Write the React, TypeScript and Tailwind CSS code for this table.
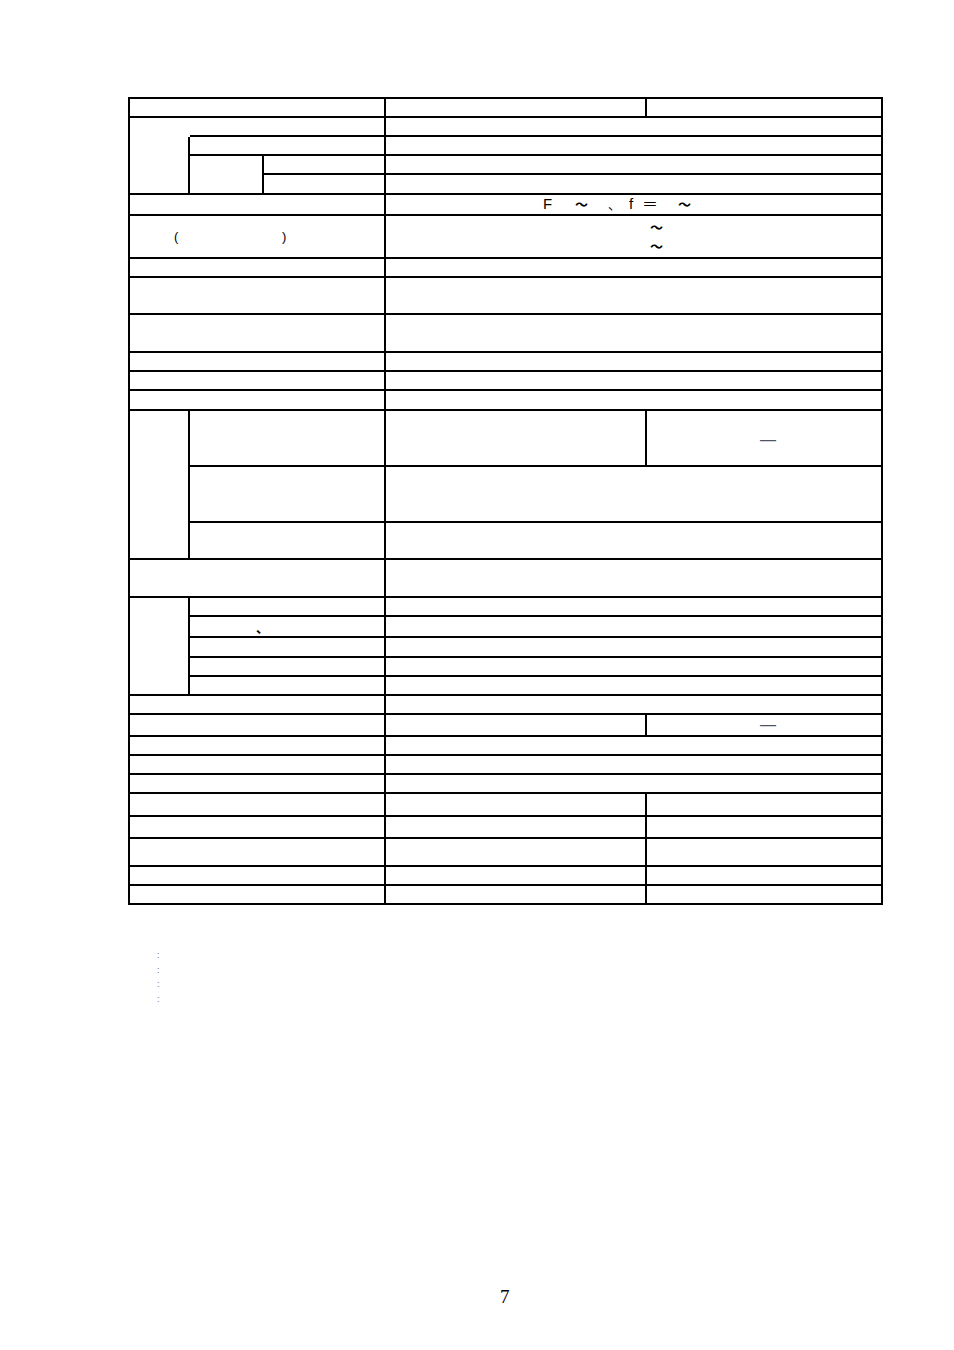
import React from 'react';

interface CellProps {
    className?: string;
    children?: React.ReactNode;
}

function Cell({ className = '', children }: CellProps) {
    return (
        <div className={`border-r-2 border-b-2 border-black flex items-center ${className}`}>
            {children}
        </div>
    );
}

// plain rows: label over the three left columns, value over the two right ones
function WideRow() {
    return (
        <>
            <Cell className="col-span-3" />
            <Cell className="col-span-2" />
        </>
    );
}

function SubRow({ children }: { children?: React.ReactNode }) {
    return (
        <>
            <Cell className="col-span-2">{children}</Cell>
            <Cell className="col-span-2" />
        </>
    );
}

function SplitRow({ right }: { right?: React.ReactNode }) {
    return (
        <>
            <Cell className="col-span-3" />
            <Cell />
            <Cell>{right}</Cell>
        </>
    );
}

const dash = <span className="w-full text-center pl-[8px] text-[16px] text-gray-600 leading-none">—</span>;

export default function App() {
    return (
        <div
            className="min-h-[1350px] w-[954px] bg-white pl-[128px] pt-[97px] text-black text-[13px]"
            style={{ fontFamily: '"Liberation Sans", "Noto Sans CJK JP", sans-serif' }}
        >
            <div className="grid w-fit border-l-2 border-t-2 border-black grid-cols-[60px_74px_122px_261px_236px] grid-rows-[19px_19px_19px_19px_20px_21px_43px_19px_37px_38px_19px_19px_20px_56px_56px_37px_38px_19px_21px_20px_19px_19px_19px_22px_19px_19px_19px_23px_22px_28px_19px_19px]">
                {/* r1 */}
                <SplitRow />

                {/* r2 - r5 */}
                <div />
                <SubRow />
                <Cell className="row-span-3" />
                <SubRow />
                <Cell className="row-span-2" />
                <Cell />
                <Cell className="col-span-2" />
                <Cell />
                <Cell className="col-span-2" />

                {/* r6 */}
                <Cell className="col-span-3" />
                <Cell className="col-span-2 pl-[157px]">
                    <span className="w-[32px] text-[15px]">F</span>
                    <span className="w-[33px] font-bold">～</span>
                    <span className="w-[21px]">、</span>
                    <span className="w-[13px] text-[15px]">f</span>
                    <span className="w-[36px] text-[16px]">＝</span>
                    <span className="font-bold">～</span>
                </Cell>

                {/* r7 */}
                <Cell className="col-span-3 pl-[44px]">
                    <span className="w-[108px]">(</span>
                    <span>)</span>
                </Cell>
                <Cell className="col-span-2 pl-[264px]">
                    <div className="flex flex-col leading-[19px] font-bold">
                        <span>～</span>
                        <span>～</span>
                    </div>
                </Cell>

                {/* r8 - r13 */}
                <WideRow />
                <WideRow />
                <WideRow />
                <WideRow />
                <WideRow />
                <WideRow />

                {/* r14 - r16 */}
                <Cell className="row-span-3" />
                <Cell className="col-span-2" />
                <Cell />
                <Cell className="pt-[3px]">{dash}</Cell>
                <SubRow />
                <SubRow />

                {/* r17 */}
                <WideRow />

                {/* r18 - r22 */}
                <Cell className="row-span-5" />
                <SubRow />
                <SubRow>
                    <span className="pl-[66px] pt-[2px] font-bold">、</span>
                </SubRow>
                <SubRow />
                <SubRow />
                <SubRow />

                {/* r23 - r27 */}
                <WideRow />
                <SplitRow right={dash} />
                <WideRow />
                <WideRow />
                <WideRow />

                {/* r28 - r32 */}
                <SplitRow />
                <SplitRow />
                <SplitRow />
                <SplitRow />
                <SplitRow />
            </div>

            <div className="mt-[43px] pl-[29px] flex flex-col text-[9px] leading-[14.5px] text-gray-500">
                <span>:</span>
                <span>:</span>
                <span>:</span>
                <span>:</span>
            </div>

            <div
                className="mt-[281px] pl-[372px] text-[19px] leading-[20px]"
                style={{ fontFamily: '"Liberation Serif", serif' }}
            >
                7
            </div>
        </div>
    );
}
